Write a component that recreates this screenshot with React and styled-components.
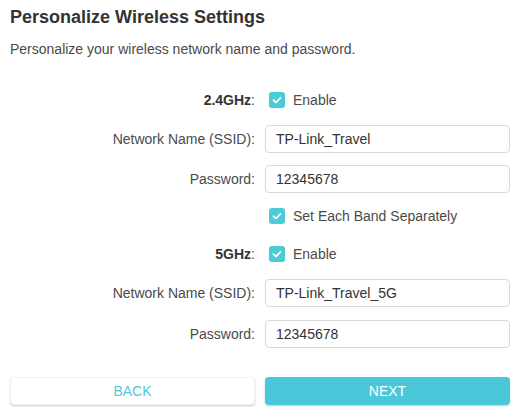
import React from "react";
import styled, { createGlobalStyle } from "styled-components";

const Global = createGlobalStyle`
  html, body { margin: 0; padding: 0; background: #fff; }
  body { font-family: Arial, "Liberation Sans", sans-serif; color: #4a4a4a; }
  * { box-sizing: border-box; }
`;

const Page = styled.div`
  width: 520px;
  height: 412px;
  padding: 6px 10px 0 10px;
  display: flex;
  flex-direction: column;
`;

const Title = styled.h1`
  margin: 0;
  font-size: 18px;
  line-height: 22px;
  font-weight: bold;
  color: #333;
`;

const Subtitle = styled.p`
  margin: 12px 0 0 0;
  font-size: 14px;
  line-height: 18px;
  color: #4a4a4a;
`;

const Form = styled.div`
  display: flex;
  flex-direction: column;
  margin-top: 32px;
`;

const Row = styled.div`
  display: grid;
  grid-template-columns: 245px 245px;
  column-gap: 10px;
  align-items: center;
  height: ${(p) => p.$h}px;
  margin-top: ${(p) => p.$mt}px;
`;

const Label = styled.div`
  text-align: right;
  font-size: 14px;
  color: #4a4a4a;
  b { color: #333; }
`;

const Input = styled.input`
  width: 245px;
  height: 28px;
  border: 1px solid #d9d9d9;
  border-radius: 4px;
  padding: 0 10px;
  font-family: Arial, "Liberation Sans", sans-serif;
  font-size: 14px;
  color: #333;
  outline: none;
`;

const Check = styled.label`
  display: flex;
  align-items: center;
  gap: 8px;
  padding-left: 4px;
  font-size: 14px;
  color: #4a4a4a;
`;

const Box = styled.span`
  width: 16px;
  height: 16px;
  border-radius: 3px;
  background: #4acbd6;
  display: flex;
  align-items: center;
  justify-content: center;
`;

const Buttons = styled.div`
  display: grid;
  grid-template-columns: 245px 245px;
  column-gap: 10px;
  margin-top: 29px;
`;

const Button = styled.button`
  height: 28px;
  border-radius: 4px;
  font-family: Arial, "Liberation Sans", sans-serif;
  font-size: 14px;
  border: ${(p) => (p.$primary ? "none" : "1px solid #eef4f6")};
  background: ${(p) => (p.$primary ? "#4ac7d8" : "#fff")};
  color: ${(p) => (p.$primary ? "#fff" : "#4acbd6")};
  box-shadow: 0 1px 2px rgba(60, 120, 140, 0.35);
  cursor: pointer;
`;

const Tick = () => (
  <svg width="10" height="8" viewBox="0 0 10 8">
    <path d="M1.5 4.2 L4 6.5 L8.5 1.8" fill="none" stroke="#fff" strokeWidth="1.8" strokeLinecap="round" strokeLinejoin="round" />
  </svg>
);

const CheckItem = ({ children }) => (
  <Check>
    <Box><Tick /></Box>
    {children}
  </Check>
);

export default function App() {
  return (
    <>
      <Global />
      <Page>
        <Title>Personalize Wireless Settings</Title>
        <Subtitle>Personalize your wireless network name and password.</Subtitle>
        <Form>
          <Row $h={20} $mt={0}>
            <Label><b>2.4GHz</b>:</Label>
            <CheckItem>Enable</CheckItem>
          </Row>
          <Row $h={28} $mt={15}>
            <Label>Network Name (SSID):</Label>
            <Input defaultValue="TP-Link_Travel" />
          </Row>
          <Row $h={28} $mt={12}>
            <Label>Password:</Label>
            <Input defaultValue="12345678" />
          </Row>
          <Row $h={20} $mt={13}>
            <div />
            <CheckItem>Set Each Band Separately</CheckItem>
          </Row>
          <Row $h={20} $mt={18}>
            <Label><b>5GHz</b>:</Label>
            <CheckItem>Enable</CheckItem>
          </Row>
          <Row $h={28} $mt={15}>
            <Label>Network Name (SSID):</Label>
            <Input defaultValue="TP-Link_Travel_5G" />
          </Row>
          <Row $h={28} $mt={13}>
            <Label>Password:</Label>
            <Input defaultValue="12345678" />
          </Row>
        </Form>
        <Buttons>
          <Button>BACK</Button>
          <Button $primary>NEXT</Button>
        </Buttons>
      </Page>
    </>
  );
}
